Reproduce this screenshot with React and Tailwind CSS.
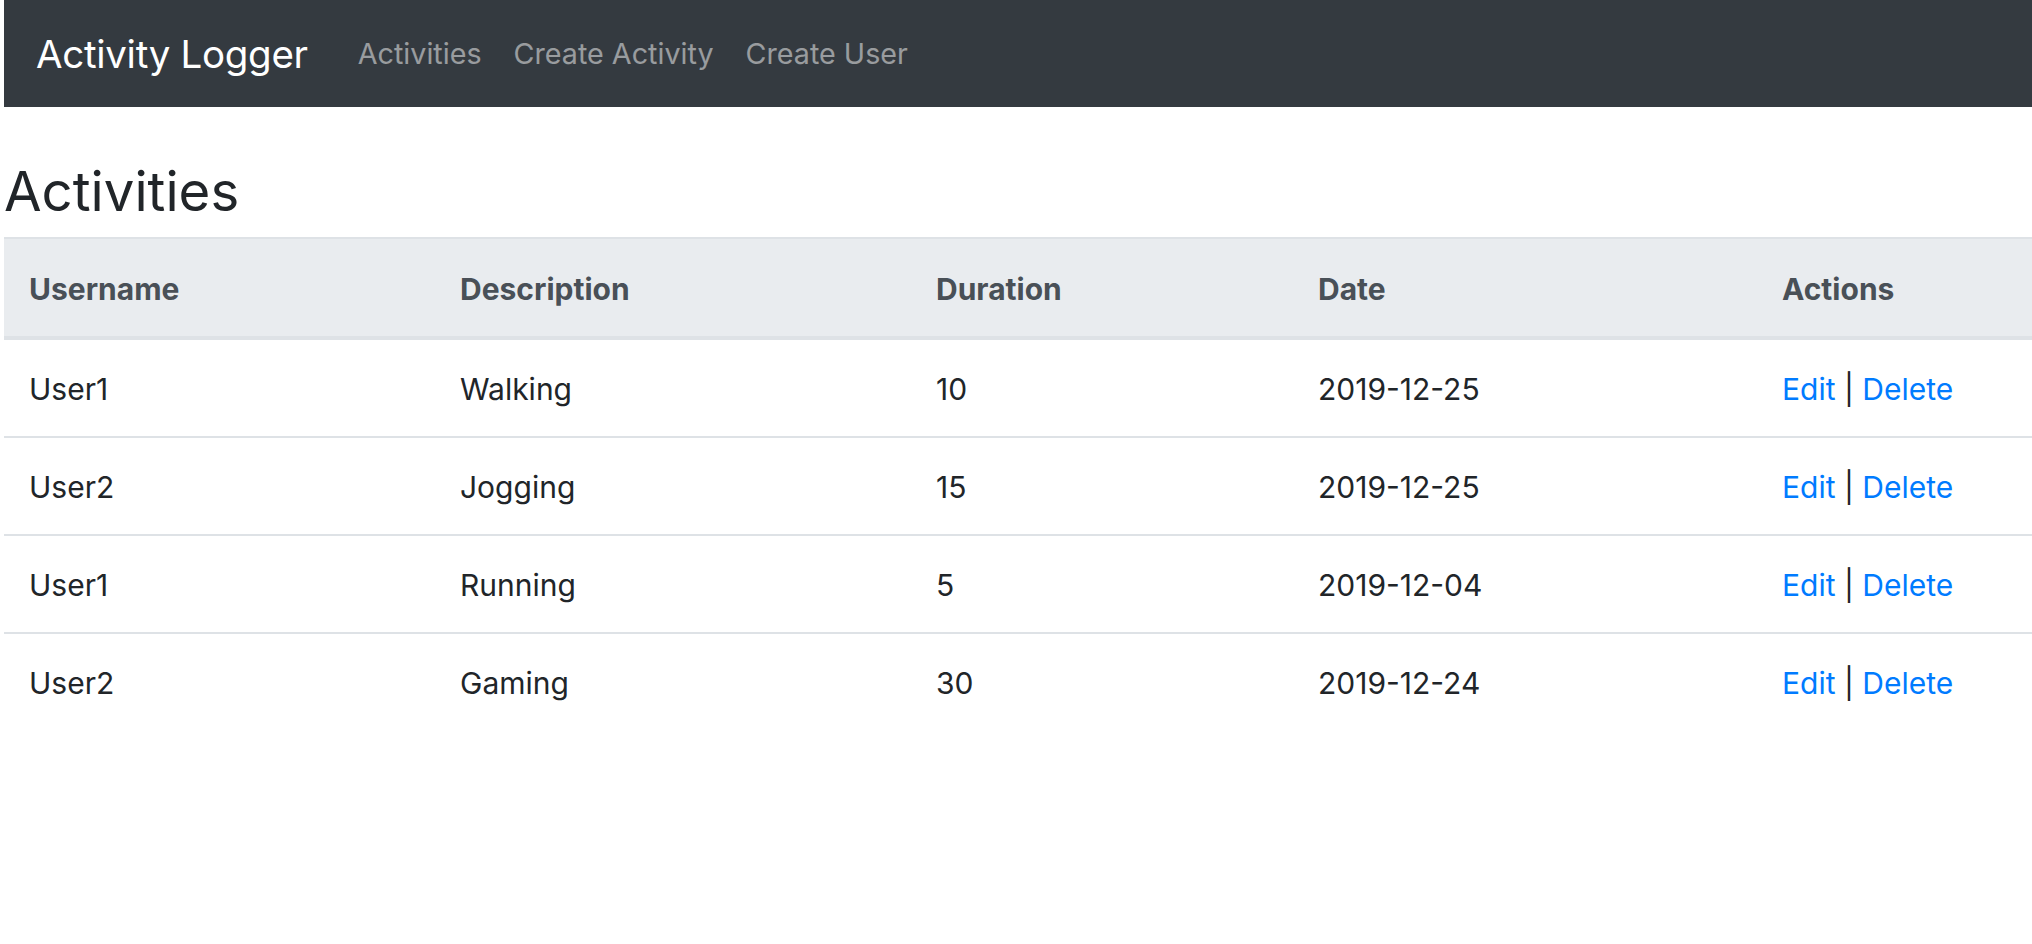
import React from "react";

const activities = [
  { id: 1, username: "User1", description: "Walking", duration: 10, date: "2019-12-25" },
  { id: 2, username: "User2", description: "Jogging", duration: 15, date: "2019-12-25" },
  { id: 3, username: "User1", description: "Running", duration: 5, date: "2019-12-04" },
  { id: 4, username: "User2", description: "Gaming", duration: 30, date: "2019-12-24" },
];

const cols = "grid grid-cols-[431px_476px_382px_464px_1fr]";

const App = () => {
  return (
    <div className="min-h-screen bg-white pl-1 font-['Inter','Liberation_Sans',sans-serif] text-[#212529]">
      <nav className="h-[107px] bg-[#343a40] flex items-center pl-[32px]">
        <a href="#" className="text-white text-[38.5px] leading-[44px] mr-[34px] tracking-[-0.3px]">
          Activity Logger
        </a>
        <div className="flex items-center">
          <a href="#" className="px-[16px] text-[28.7px] leading-[40px] text-white/50">Activities</a>
          <a href="#" className="px-[16px] text-[28.7px] leading-[40px] text-white/50">Create Activity</a>
          <a href="#" className="px-[16px] text-[28.7px] leading-[40px] text-white/50">Create User</a>
        </div>
      </nav>

      <h3 className="mt-[52px] mb-[14px] text-[54.5px] leading-[64px] font-normal">Activities</h3>

      <div className="text-[30px] leading-[36px]">
        <div className={`${cols} bg-[#e9ecef] border-t-2 border-b-4 border-[#dee2e6] font-bold text-[#495057]`}>
          <div className="pl-[25px] pt-[32px] pb-[29px]">Username</div>
          <div className="pl-[25px] pt-[32px] pb-[29px]">Description</div>
          <div className="pl-[25px] pt-[32px] pb-[29px]">Duration</div>
          <div className="pl-[25px] pt-[32px] pb-[29px]">Date</div>
          <div className="pl-[25px] pt-[32px] pb-[29px]">Actions</div>
        </div>
        {activities.map((a, i) => (
          <div
            key={a.id}
            className={`${cols} ${i > 0 ? "border-t-2 border-[#dee2e6]" : ""}`}
          >
            <div className="pl-[25px] pt-[31px] pb-[29px]">{a.username}</div>
            <div className="pl-[25px] pt-[31px] pb-[29px]">{a.description}</div>
            <div className="pl-[25px] pt-[31px] pb-[29px]">{a.duration}</div>
            <div className="pl-[25px] pt-[31px] pb-[29px]">{a.date}</div>
            <div className="pl-[25px] pt-[31px] pb-[29px] whitespace-nowrap">
              <a href="#" className="text-[#007bff]">Edit</a> | <a href="#" className="text-[#007bff]">Delete</a>
            </div>
          </div>
        ))}
      </div>
    </div>
  );
};

export default App;
